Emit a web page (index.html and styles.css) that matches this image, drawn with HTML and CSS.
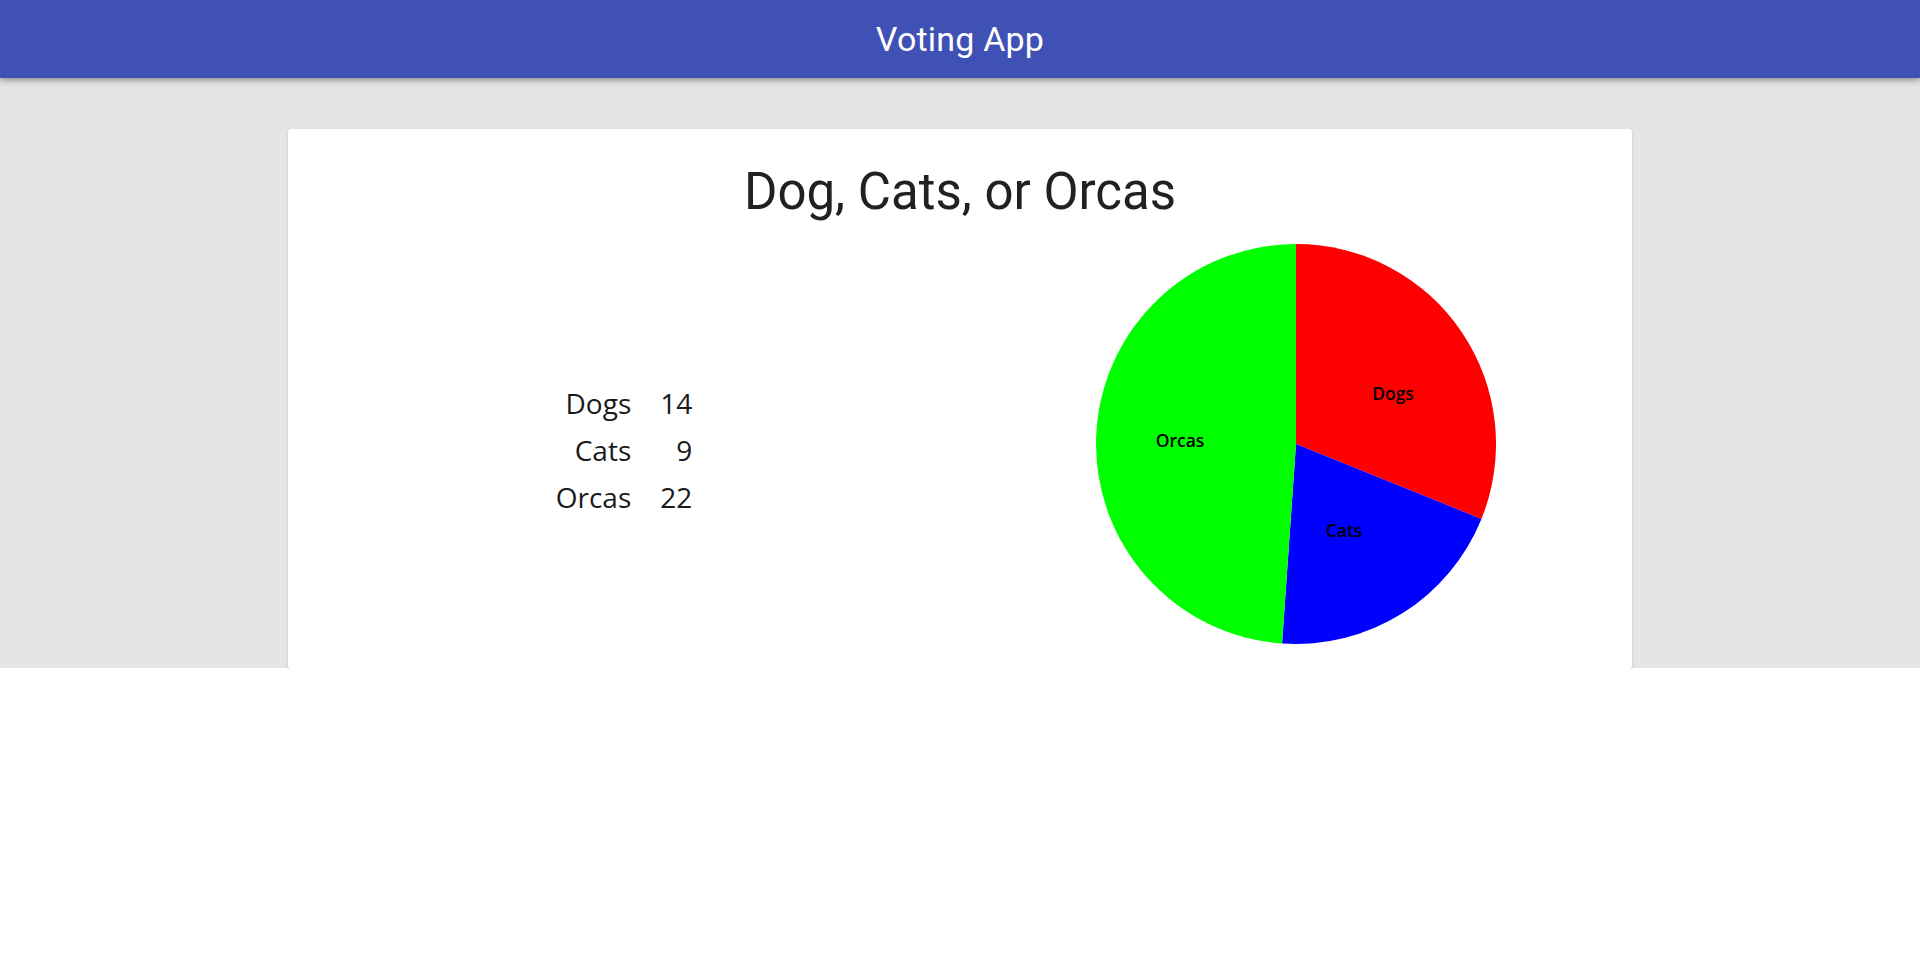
FILE: index.html
```html
<!DOCTYPE html>
<html lang="en">
<head>
<meta charset="utf-8">
<title>Voting App</title>
<link rel="stylesheet" href="styles.css">
</head>
<body>
<header class="toolbar">
  <span class="toolbar-title">Voting App</span>
</header>
<main class="stage">
  <section class="card">
    <h1 class="card-title">Dog, Cats, or Orcas</h1>
    <div class="card-body">
      <div class="results-col">
        <div class="results">
          <span class="label">Dogs</span><span class="count">14</span>
          <span class="label">Cats</span><span class="count">9</span>
          <span class="label">Orcas</span><span class="count">22</span>
        </div>
      </div>
      <div class="chart-col">
        <svg class="pie" width="400" height="400" viewBox="0 0 400 400">
          <path d="M200,200 L200,0 A200,200 0 0 1 385.44,274.92 Z" fill="#ff0000"/>
          <path d="M200,200 L385.44,274.92 A200,200 0 0 1 186.05,399.51 Z" fill="#0000ff"/>
          <path d="M200,200 L186.05,399.51 A200,200 0 0 1 200,0 Z" fill="#00ff00"/>
          <text class="slice-label" x="297" y="156">Dogs</text>
          <text class="slice-label" x="248" y="293">Cats</text>
          <text class="slice-label" x="84" y="203">Orcas</text>
        </svg>
      </div>
    </div>
  </section>
</main>
</body>
</html>
```

FILE: styles.css
```css
html, body {
  margin: 0;
  padding: 0;
  background: #ffffff;
}

body {
  font-family: Roboto, "Liberation Sans", sans-serif;
}

.toolbar {
  position: relative;
  z-index: 2;
  height: 78px;
  background: #3f51b5;
  display: flex;
  align-items: center;
  justify-content: center;
  box-shadow: 0 2px 4px -1px rgba(0,0,0,.2), 0 4px 5px 0 rgba(0,0,0,.14), 0 1px 10px 0 rgba(0,0,0,.12);
}

.toolbar-title {
  color: #ffffff;
  font-size: 34px;
  font-weight: 400;
  letter-spacing: 0.2px;
}

.stage {
  background: #e5e5e5;
  padding-top: 51px;
  display: flex;
  justify-content: center;
}

.card {
  width: 70%;
  background: #ffffff;
  border-radius: 4px;
  box-shadow: 0 2px 1px -1px rgba(0,0,0,.2), 0 1px 1px 0 rgba(0,0,0,.14), 0 1px 3px 0 rgba(0,0,0,.12);
  padding: 33px 0 25px;
  box-sizing: border-box;
  margin-bottom: -1px;
}

.card-title {
  margin: 0;
  text-align: center;
  font-family: Roboto, sans-serif;
  font-weight: 400;
  font-size: 51px;
  line-height: 59px;
  color: #212121;
}

.card-body {
  margin-top: 23px;
  display: grid;
  grid-template-columns: 1fr 1fr;
}

.results-col {
  display: flex;
  align-items: center;
  justify-content: center;
  padding-top: 12px;
}

.results {
  display: grid;
  grid-template-columns: auto auto;
  column-gap: 29px;
  font-family: "Open Sans", "Noto Sans", sans-serif;
  font-size: 28px;
  line-height: 47px;
  color: #1a1a1a;
  text-align: right;
}

.chart-col {
  display: flex;
  justify-content: center;
}

.pie {
  display: block;
}

.slice-label {
  font-family: "Open Sans", "Noto Sans", sans-serif;
  font-size: 17.5px;
  font-weight: 600;
  fill: #000000;
  text-anchor: middle;
}
```
